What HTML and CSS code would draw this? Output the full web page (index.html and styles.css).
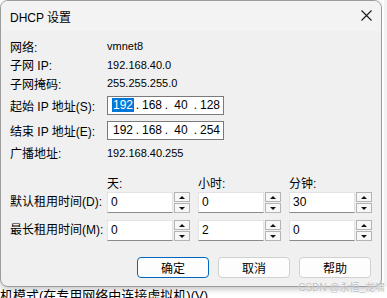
FILE: index.html
```html
<!DOCTYPE html>
<html lang="zh-CN">
<head>
  <meta charset="UTF-8" />
  <title>DHCP 设置</title>
  <link rel="stylesheet" href="styles.css">
</head>
<body>
  <div class="screen">
    <div class="dialog">
      <div class="titlebar">
        <span class="title">DHCP 设置</span>
        <svg class="close" width="11" height="11" viewBox="0 0 11 11">
          <path d="M0.5 0.5 L10.5 10.5 M10.5 0.5 L0.5 10.5" stroke="#1a1a1a" stroke-width="1.1" fill="none"/>
        </svg>
      </div>

      <div class="content">
        <div class="info">
          <span class="label">网络:</span><span class="value">vmnet8</span>
          <span class="label">子网 IP:</span><span class="value">192.168.40.0</span>
          <span class="label">子网掩码:</span><span class="value">255.255.255.0</span>
        </div>

        <div class="ip-rows">
          <span class="label">起始 IP 地址(S):</span>
          <div class="ip-box">
            <span class="seg"><span class="sel">192</span></span><span class="dot">.</span><span class="seg">168</span><span class="dot">.</span><span class="seg">40</span><span class="dot">.</span><span class="seg">128</span>
          </div>
          <span class="label">结束 IP 地址(E):</span>
          <div class="ip-box">
            <span class="seg">192</span><span class="dot">.</span><span class="seg">168</span><span class="dot">.</span><span class="seg">40</span><span class="dot">.</span><span class="seg">254</span>
          </div>
        </div>

        <div class="info broadcast">
          <span class="label">广播地址:</span><span class="value">192.168.40.255</span>
        </div>

        <div class="lease">
          <span></span>
          <span class="head">天:</span>
          <span class="head">小时:</span>
          <span class="head">分钟:</span>

          <span class="label row-label">默认租用时间(D):</span>
          <div class="spin"><span class="field">0</span><span class="arrows"><i class="up"></i><i class="down"></i></span></div>
          <div class="spin"><span class="field">0</span><span class="arrows"><i class="up"></i><i class="down"></i></span></div>
          <div class="spin"><span class="field">30</span><span class="arrows"><i class="up"></i><i class="down"></i></span></div>

          <span class="label row-label">最长租用时间(M):</span>
          <div class="spin"><span class="field">0</span><span class="arrows"><i class="up"></i><i class="down"></i></span></div>
          <div class="spin"><span class="field">2</span><span class="arrows"><i class="up"></i><i class="down"></i></span></div>
          <div class="spin"><span class="field">0</span><span class="arrows"><i class="up"></i><i class="down"></i></span></div>
        </div>

        <div class="buttons">
          <button class="btn primary">确定</button>
          <button class="btn">取消</button>
          <button class="btn">帮助</button>
        </div>
      </div>
    </div>
    <div class="side"></div>
    <div class="below">机模式(在专用网络中连接虚拟机)(V)</div>
    <span class="watermark">CSDN @永恒_龙啸</span>
  </div>
</body>
</html>
```

FILE: styles.css
```css
* { box-sizing: border-box; }

body {
  margin: 0;
  background: #ffffff;
  font-family: "Liberation Sans", "Noto Sans CJK SC", sans-serif;
  font-size: 12px;
  color: #000;
}

.screen {
  position: relative;
  width: 387px;
  height: 298px;
  overflow: hidden;
  display: grid;
  grid-template-columns: 382px 5px;
  grid-template-rows: 287px 11px;
}

.dialog {
  background: #f0f0f0;
  border: 1px solid #9c9c9c;
  border-radius: 8px;
  overflow: hidden;
  box-shadow: 0 2px 6px rgba(0, 0, 0, 0.25);
}

.titlebar {
  height: 30px;
  display: flex;
  align-items: center;
  justify-content: space-between;
  padding: 0 9px 0 9px;
  background: #f3f3f3;
}

.title { font-size: 12px; }

.close { margin-top: -1px; }

.content {
  padding: 6px 10px 0 9px;
}

.label { white-space: nowrap; }

.info {
  display: grid;
  grid-template-columns: 97px 1fr;
  grid-auto-rows: 18.5px;
  align-items: center;
}

.value {
  font-size: 11px;
}

.ip-rows {
  margin-top: 3px;
  display: grid;
  grid-template-columns: 97px 117px;
  grid-auto-rows: 19px;
  row-gap: 6px;
  align-items: center;
}

.ip-box {
  height: 19px;
  background: #fff;
  border: 1px solid #7a7a7a;
  display: flex;
  align-items: center;
  padding-left: 4px;
  font-size: 12px;
}

.seg {
  width: 22px;
  text-align: center;
}

.dot {
  width: 7px;
  text-align: center;
}

.sel {
  background: #0078d7;
  color: #fff;
  padding: 0 1px;
}

.broadcast {
  margin-top: 4px;
}

.lease {
  margin-top: 11px;
  display: grid;
  grid-template-columns: 97px 91px 91px 83px;
  grid-template-rows: 18px 22px 28px;
  align-items: end;
}

.head {
  align-self: center;
  font-size: 12px;
}

.row-label {
  height: 21px;
  line-height: 21px;
}

.spin {
  display: flex;
  gap: 1px;
  height: 21px;
}

.field {
  width: 66px;
  height: 21px;
  background: #fff;
  border: 1px solid #e3e3e3;
  border-bottom-color: #8a8a8a;
  padding-left: 3px;
  line-height: 19px;
  font-size: 12px;
}

.arrows {
  width: 16px;
  display: flex;
  flex-direction: column;
  gap: 1px;
}

.arrows i {
  flex: 1;
  border: 1px solid #b4b4b4;
  background: #f7f7f7;
  display: flex;
  align-items: center;
  justify-content: center;
}

.arrows i::after {
  content: '';
  border-left: 3px solid transparent;
  border-right: 3px solid transparent;
}

.arrows .up::after { border-bottom: 3px solid #111; }
.arrows .down::after { border-top: 3px solid #111; }

.buttons {
  margin-top: 16px;
  display: flex;
  justify-content: flex-end;
  gap: 9px;
}

.btn {
  width: 72px;
  height: 21px;
  background: #fdfdfd;
  border: 1px solid #d0d0d0;
  border-radius: 4px;
  font-family: inherit;
  font-size: 12px;
  color: #000;
  padding: 0;
}

.btn.primary {
  border: 1px solid #0067c0;
  box-shadow: inset 0 0 0 1px #fdfdfd;
}

.side {
  background: #f3f3f3;
  border-left: 2px solid #fff;
}

.below {
  grid-column: 1 / 3;
  font-size: 13px;
  line-height: 14px;
  padding-top: 2px;
  white-space: nowrap;
  overflow: hidden;
}

.watermark {
  position: absolute;
  right: 2px;
  top: 279px;
  font-size: 10px;
  color: rgba(150, 150, 150, 0.6);
  text-shadow: 0 0 1px #fff;
}
```
